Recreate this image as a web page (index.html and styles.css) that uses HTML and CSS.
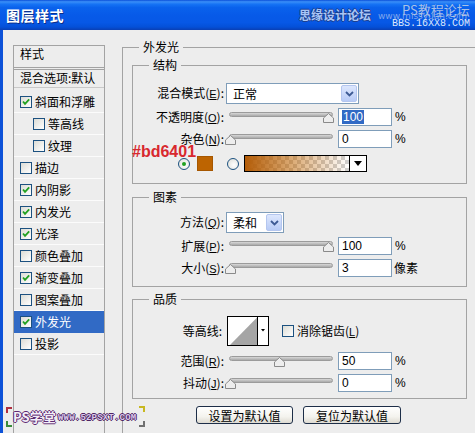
FILE: index.html
```html
<!DOCTYPE html>
<html lang="zh-CN">
<head>
<meta charset="utf-8">
<title>图层样式</title>
<link rel="stylesheet" href="styles.css">
</head>
<body>
<div class="window">
  <div class="titlebar">
    <span class="title">图层样式</span>
    <span class="wm wm-sy">思缘设计论坛</span>
    <span class="wm wm-url">www.missyuan.com</span>
    <span class="wm wm-ps">PS教程论坛</span>
    <span class="wm wm-bbs">BBS.16XX8.COM</span>
  </div>
  <div class="body">
    <div class="styles-list">
      <div class="list-head">样式</div>
      <div class="list-blend">混合选项:默认</div>
      <ul class="list-items">
        <li class="item"><span class="cb"><svg width="10" height="10" viewBox="0 0 10 10"><path d="M2 4.5 L4 6.8 L8.2 2.3" stroke="#21a121" stroke-width="1.8" fill="none"/></svg></span>斜面和浮雕</li>
        <li class="item sub"><span class="cb"></span>等高线</li>
        <li class="item sub"><span class="cb"></span>纹理</li>
        <li class="item"><span class="cb"></span>描边</li>
        <li class="item"><span class="cb"><svg width="10" height="10" viewBox="0 0 10 10"><path d="M2 4.5 L4 6.8 L8.2 2.3" stroke="#21a121" stroke-width="1.8" fill="none"/></svg></span>内阴影</li>
        <li class="item"><span class="cb"><svg width="10" height="10" viewBox="0 0 10 10"><path d="M2 4.5 L4 6.8 L8.2 2.3" stroke="#21a121" stroke-width="1.8" fill="none"/></svg></span>内发光</li>
        <li class="item"><span class="cb"><svg width="10" height="10" viewBox="0 0 10 10"><path d="M2 4.5 L4 6.8 L8.2 2.3" stroke="#21a121" stroke-width="1.8" fill="none"/></svg></span>光泽</li>
        <li class="item"><span class="cb"></span>颜色叠加</li>
        <li class="item"><span class="cb"><svg width="10" height="10" viewBox="0 0 10 10"><path d="M2 4.5 L4 6.8 L8.2 2.3" stroke="#21a121" stroke-width="1.8" fill="none"/></svg></span>渐变叠加</li>
        <li class="item"><span class="cb"></span>图案叠加</li>
        <li class="item sel"><span class="cb"><svg width="10" height="10" viewBox="0 0 10 10"><path d="M2 4.5 L4 6.8 L8.2 2.3" stroke="#21a121" stroke-width="1.8" fill="none"/></svg></span>外发光</li>
        <li class="item"><span class="cb"></span>投影</li>
      </ul>
    </div>
    <div class="main">
      <div class="outer">
        <span class="legend">外发光</span>

        <div class="group g-struct">
          <span class="legend">结构</span>
          <div class="row r-sel">
            <span class="lbl">混合模式(<u>E</u>):</span>
            <div class="select s-mode"><span>正常</span><span class="dd"><svg width="9" height="6" viewBox="0 0 9 6"><path d="M1 1 L4.5 4.5 L8 1" stroke="#3d5a94" stroke-width="1.8" fill="none"/></svg></span></div>
          </div>
          <div class="row r-num">
            <span class="lbl">不透明度(<u>O</u>):</span>
            <div class="slider"><div class="track"></div><svg class="thumb" style="--v:100" width="11" height="10" viewBox="0 0 11 10"><path d="M5.5 0.5 L10.5 5 L10.5 9.5 L0.5 9.5 L0.5 5 Z" fill="#ededed" stroke="#8a8a8a"/></svg></div>
            <div class="num"><span class="hl">100</span></div>
            <span class="unit">%</span>
          </div>
          <div class="row r-num">
            <span class="lbl">杂色(<u>N</u>):</span>
            <div class="slider"><div class="track"></div><svg class="thumb" style="--v:0" width="11" height="10" viewBox="0 0 11 10"><path d="M5.5 0.5 L10.5 5 L10.5 9.5 L0.5 9.5 L0.5 5 Z" fill="#ededed" stroke="#8a8a8a"/></svg></div>
            <div class="num">0</div>
            <span class="unit">%</span>
          </div>
          <div class="row r-color">
            <span class="radio on"></span>
            <span class="swatch"></span>
            <span class="radio r2"></span>
            <div class="grad"><span class="grad-fill"></span><span class="grad-btn"><svg width="8" height="5" viewBox="0 0 8 5"><path d="M0 0 H8 L4 5 Z" fill="#000"/></svg></span></div>
          </div>
        </div>

        <div class="group g-elem">
          <span class="legend">图素</span>
          <div class="row r-sel">
            <span class="lbl">方法(<u>Q</u>):</span>
            <div class="select s-method"><span>柔和</span><span class="dd"><svg width="9" height="6" viewBox="0 0 9 6"><path d="M1 1 L4.5 4.5 L8 1" stroke="#3d5a94" stroke-width="1.8" fill="none"/></svg></span></div>
          </div>
          <div class="row r-num">
            <span class="lbl">扩展(<u>P</u>):</span>
            <div class="slider"><div class="track"></div><svg class="thumb" style="--v:100" width="11" height="10" viewBox="0 0 11 10"><path d="M5.5 0.5 L10.5 5 L10.5 9.5 L0.5 9.5 L0.5 5 Z" fill="#ededed" stroke="#8a8a8a"/></svg></div>
            <div class="num">100</div>
            <span class="unit">%</span>
          </div>
          <div class="row r-num">
            <span class="lbl">大小(<u>S</u>):</span>
            <div class="slider"><div class="track"></div><svg class="thumb" style="--v:0" width="11" height="10" viewBox="0 0 11 10"><path d="M5.5 0.5 L10.5 5 L10.5 9.5 L0.5 9.5 L0.5 5 Z" fill="#ededed" stroke="#8a8a8a"/></svg></div>
            <div class="num">3</div>
            <span class="unit unit-cjk">像素</span>
          </div>
        </div>

        <div class="group g-qual">
          <span class="legend">品质</span>
          <div class="row r-contour">
            <span class="lbl lbl-c">等高线:</span>
            <div class="contour"><svg width="40" height="28" viewBox="0 0 40 28"><rect width="40" height="28" fill="#fff"/><path d="M2 28 L29.5 0 L29.5 28 Z" fill="#a5a5a5"/><path d="M29.5 0 V28" stroke="#000" stroke-width="1"/><path d="M33 12 H37 L35 14.5 Z" fill="#000"/></svg></div>
            <span class="cb cb-aa"></span>
            <span class="aa">消除锯齿(<u>L</u>)</span>
          </div>
          <div class="row r-num r-range">
            <span class="lbl">范围(<u>R</u>):</span>
            <div class="slider"><div class="track"></div><svg class="thumb" style="--v:50" width="11" height="10" viewBox="0 0 11 10"><path d="M5.5 0.5 L10.5 5 L10.5 9.5 L0.5 9.5 L0.5 5 Z" fill="#ededed" stroke="#8a8a8a"/></svg></div>
            <div class="num">50</div>
            <span class="unit">%</span>
          </div>
          <div class="row r-num">
            <span class="lbl">抖动(<u>J</u>):</span>
            <div class="slider"><div class="track"></div><svg class="thumb" style="--v:0" width="11" height="10" viewBox="0 0 11 10"><path d="M5.5 0.5 L10.5 5 L10.5 9.5 L0.5 9.5 L0.5 5 Z" fill="#ededed" stroke="#8a8a8a"/></svg></div>
            <div class="num">0</div>
            <span class="unit">%</span>
          </div>
        </div>

        <div class="buttons">
          <button class="btn b1">设置为默认值</button>
          <button class="btn b2">复位为默认值</button>
        </div>
      </div>
    </div>
  </div>
  <div class="annot">#bd6401</div>
  <div class="wm-bottom">
    <span class="mk mk1"></span>
    <span class="mk mk2"></span>
    <span class="wb-ps">PS学堂</span>
    <span class="wb-url">WWW.52PSXT.COM</span>
    <span class="mk mk3"></span>
    <span class="mk mk4"></span>
  </div>
</div>
</body>
</html>
```

FILE: styles.css
```css
* { box-sizing: border-box; }
body {
  margin: 0;
  width: 475px;
  height: 433px;
  overflow: hidden;
  background: #ededed;
  font: 12px/14px "Noto Sans CJK SC", "Noto Sans", sans-serif;
  color: #000;
}
.window {
  position: relative;
  width: 475px;
  height: 433px;
  overflow: hidden;
}
.titlebar {
  position: relative;
  height: 30px;
  display: flex;
  align-items: center;
  background: linear-gradient(to bottom, #0a4fd9 0%, #3a8ff8 6%, #1673f4 14%, #0a62ec 25%, #075ae8 50%, #0758e6 75%, #0450d8 90%, #0a3fb4 100%);
}
.title {
  margin-left: 6px;
  color: #fff;
  font-weight: bold;
  font-size: 14px;
  letter-spacing: 0.5px;
  text-shadow: 1px 1px 0 #0b2f8a;
}
.wm { position: absolute; white-space: nowrap; }
.wm-sy {
  left: 299px; top: 8px;
  font-size: 12px; font-weight: bold; line-height: 14px;
  color: #a9c6f6;
  text-shadow: -1px 0 #1d3f8f, 1px 0 #1d3f8f, 0 -1px #1d3f8f, 0 1px #1d3f8f;
}
.wm-url {
  left: 378px; top: 12px;
  font: 9px/9px "DejaVu Sans", sans-serif;
  color: #7ea6ec;
}
.wm-ps {
  left: 402px; top: 3px;
  font-size: 13px; line-height: 13px;
  color: rgba(200, 210, 228, 0.85);
}
.wm-bbs {
  left: 392px; top: 19px;
  font: 10px/10px "Liberation Mono", monospace;
  color: #dfe8fa;
}
.body {
  display: flex;
  height: 403px;
  border-left: 3px solid #0d52d8;
  background: #ededed;
}
.styles-list {
  margin: 15px 0 0 10px;
  width: 92px;
  height: 400px;
  border: 1px solid #a3a3a3;
  border-bottom: none;
  flex: none;
}
.list-head {
  height: 24px;
  padding: 1px 0 0 6px;
  border-bottom: 3px double #a3a3a3;
}
.list-blend {
  height: 18px;
  padding-left: 6px;
  line-height: 16px;
  white-space: nowrap;
  border-bottom: 1px solid #c9c9c9;
  overflow: hidden;
}
.list-items {
  list-style: none;
  margin: 3px 0 0;
  padding: 0;
}
.item {
  height: 22px;
  display: flex;
  align-items: center;
  padding-left: 6px;
  border-bottom: 1px solid #fbfbfb;
  white-space: nowrap;
}
.item.sub { padding-left: 19px; }
.item.sel { background: #316ac5; color: #fff; border-bottom-color: #316ac5; }
.cb {
  width: 12px;
  height: 12px;
  margin-right: 3px;
  border: 1px solid #1c5180;
  background: linear-gradient(135deg, #dcdcd5, #ffffff);
  display: inline-flex;
  flex: none;
}
.main { margin: 17px 0 0 17px; flex: none; }
.outer {
  position: relative;
  width: 355px;
  height: 400px;
  border: 1px solid #a3a3a3;
  border-bottom: none;
  padding: 17px 9px 0;
}
.legend {
  position: absolute;
  top: -8px;
  left: 16px;
  padding: 0 4px;
  background: #ededed;
  line-height: 14px;
}
.group {
  position: relative;
  width: 335px;
  border: 1px solid #a3a3a3;
}
.g-struct { height: 119px; padding-top: 17px; }
.g-elem { height: 90px; margin-top: 13px; padding-top: 14px; }
.g-qual { height: 100px; margin-top: 12px; padding-top: 16px; }
.row { display: flex; align-items: center; }
.r-sel { height: 21px; }
.r-num { height: 18px; margin-top: 4px; }
.r-range { margin-top: 6px; }
.lbl {
  width: 93px;
  padding-right: 2px;
  text-align: right;
  white-space: nowrap;
  flex: none;
}
.lbl u { font-family: "Liberation Sans", sans-serif; font-size: 11px; }
.lbl-c { padding-right: 4px; }
.select {
  height: 21px;
  border: 1px solid #7f9db9;
  background: #fff;
  display: flex;
  align-items: center;
  padding-left: 6px;
}
.s-mode { width: 133px; }
.s-method { width: 58px; }
.dd {
  margin-left: auto;
  margin-right: 1px;
  width: 16px;
  height: 17px;
  border: 1px solid #b4c6ef;
  border-radius: 2px;
  background: linear-gradient(#dde7fd, #b8cbf6);
  display: flex;
  align-items: center;
  justify-content: center;
}
.slider {
  position: relative;
  width: 104px;
  height: 18px;
  margin-left: 3px;
  padding-top: 4px;
  flex: none;
}
.track {
  height: 5px;
  border: 1px solid #9b9b9b;
  border-radius: 3px;
  background: linear-gradient(#d8d8d8, #a9a9a9);
}
.thumb {
  position: absolute;
  top: 5px;
  left: calc(var(--v) * 0.98px - 4px);
}
.num {
  width: 54px;
  height: 18px;
  margin-left: 5px;
  border: 1px solid #7f9db9;
  background: #fff;
  padding-left: 3px;
  font: 12px/16px "Liberation Sans", sans-serif;
  flex: none;
}
.hl { background: #316ac5; color: #fff; padding: 0 1px; }
.unit {
  margin-left: 3px;
  font: 12px/16px "Liberation Sans", sans-serif;
}
.unit-cjk { font-family: "Noto Sans CJK SC", sans-serif; margin-left: 2px; }
.r-color { height: 17px; margin-top: 7px; }
.radio {
  width: 12px;
  height: 12px;
  border-radius: 50%;
  border: 1px solid #1c5180;
  background: radial-gradient(circle at 60% 60%, #fff, #dcdcd5);
  margin-left: 45px;
  display: flex;
  align-items: center;
  justify-content: center;
  flex: none;
}
.radio.on::after {
  content: "";
  width: 4px;
  height: 4px;
  border-radius: 50%;
  background: #21a121;
}
.radio.r2 { margin-left: 14px; }
.swatch {
  width: 16px;
  height: 15px;
  margin-left: 7px;
  background: #bd6401;
  border: 1px solid #a65700;
  flex: none;
}
.grad {
  width: 123px;
  height: 17px;
  margin-left: 5px;
  border: 1px solid #000;
  display: flex;
}
.grad-fill {
  flex: 1;
  background:
    linear-gradient(to right, #b45d08 0%, rgba(189, 100, 1, 0.55) 45%, rgba(189, 100, 1, 0) 100%),
    repeating-conic-gradient(#ffffff 0 25%, #d0d0d0 0 50%) 0 0 / 8px 8px;
}
.grad-btn {
  width: 17px;
  border-left: 1px solid #000;
  background: #fff;
  display: flex;
  align-items: center;
  justify-content: center;
}
.r-contour { height: 30px; }
.contour {
  width: 42px;
  height: 30px;
  margin-left: 1px;
  border: 1px solid #000;
  flex: none;
}
.contour svg { display: block; }
.cb-aa { margin-left: 13px; margin-right: 0; }
.aa { margin-left: 3px; white-space: nowrap; }
.aa u { font-family: "Liberation Sans", sans-serif; font-size: 11px; }
.buttons {
  display: flex;
  margin: 7px 0 0 64px;
}
.btn {
  height: 18px;
  padding: 0;
  border: 1px solid #1d2e48;
  border-radius: 3px;
  background: linear-gradient(#ffffff, #f4f3ee 60%, #dedbd2);
  font: 12px/15px "Noto Sans CJK SC", sans-serif;
  color: #000;
}
.b1 { width: 97px; }
.b2 { width: 98px; margin-left: 10px; }
.annot {
  position: absolute;
  left: 132px;
  top: 146px;
  font: bold 16px/12px "Liberation Sans", sans-serif;
  color: #d8282e;
}
.wm-bottom {
  position: absolute;
  left: 0;
  top: 404px;
  width: 150px;
  height: 26px;
}
.wb-ps {
  position: absolute;
  left: 13px;
  top: 5px;
  font-size: 13px;
  font-weight: bold;
  line-height: 15px;
  color: #f3eef8;
  text-shadow: -1px 0 #5e2a72, 1px 0 #5e2a72, 0 -1px #5e2a72, 0 1px #5e2a72;
}
.wb-url {
  position: absolute;
  left: 58px;
  top: 9px;
  font: bold 9px/10px "Liberation Mono", monospace;
  letter-spacing: 0.2px;
  color: #d9c9ea;
  text-shadow: -1px 0 #4e2464, 1px 0 #4e2464, 0 -1px #4e2464, 0 1px #4e2464;
}
.mk {
  position: absolute;
  width: 6px;
  height: 6px;
  border: 2px solid;
}
.mk1 { left: 6px; top: 3px; border-color: #b03040; border-right: none; border-bottom: none; }
.mk2 { left: 6px; top: 17px; border-color: #3a8a3a; border-right: none; border-top: none; }
.mk3 { left: 139px; top: 2px; border-color: #c8b820; border-left: none; border-bottom: none; }
.mk4 { left: 139px; top: 17px; border-color: #707070; border-left: none; border-top: none; }
```
